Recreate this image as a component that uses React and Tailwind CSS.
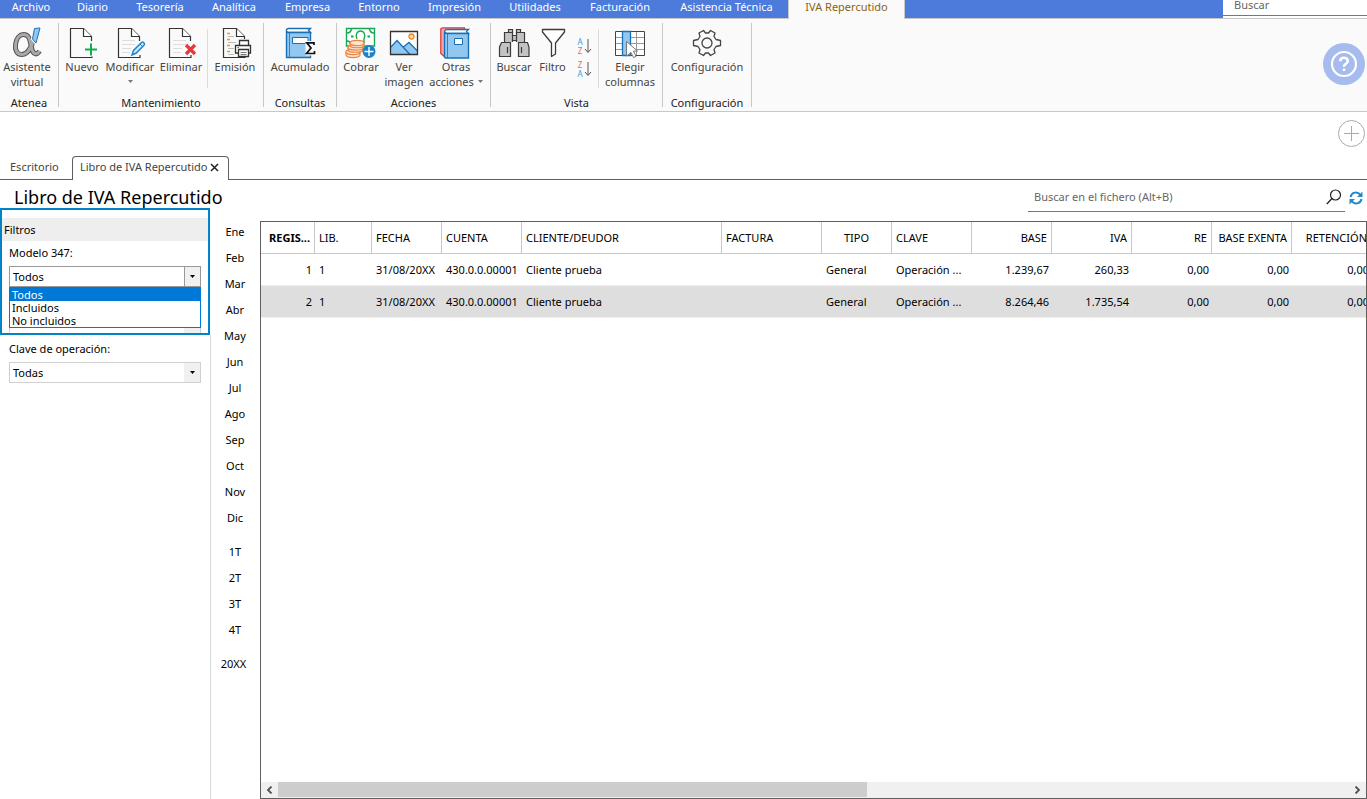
import React from "react";

const MENU = [
  ["Archivo", "w-[62px]"],
  ["Diario", "w-[61px]"],
  ["Tesorería", "w-[74px]"],
  ["Analítica", "w-[74px]"],
  ["Empresa", "w-[73px]"],
  ["Entorno", "w-[70px]"],
  ["Impresión", "w-[81px]"],
  ["Utilidades", "w-[80px]"],
  ["Facturación", "w-[90px]"],
  ["Asistencia Técnica", "w-[123px]"],
];

const MONTHS = ["Ene", "Feb", "Mar", "Abr", "May", "Jun", "Jul", "Ago", "Sep", "Oct", "Nov", "Dic"];
const QUARTERS = ["1T", "2T", "3T", "4T"];

const COLUMNS = [
  { name: "REGIS...", width: "w-[54px]", right: true, bold: true },
  { name: "LIB.", width: "w-[57px]" },
  { name: "FECHA", width: "w-[70px]" },
  { name: "CUENTA", width: "w-[80px]" },
  { name: "CLIENTE/DEUDOR", width: "w-[200px]" },
  { name: "FACTURA", width: "w-[100px]" },
  { name: "TIPO", width: "w-[70px]", centerHead: true },
  { name: "CLAVE", width: "w-[80px]" },
  { name: "BASE", width: "w-[80px]", right: true },
  { name: "IVA", width: "w-[80px]", right: true },
  { name: "RE", width: "w-[80px]", right: true },
  { name: "BASE EXENTA", width: "w-[80px]", right: true },
  { name: "RETENCIÓN", width: "w-[80px]", right: true },
];

const ROWS = [
  ["1", "1", "31/08/20XX", "430.0.0.00001", "Cliente prueba", "", "General", "Operación ...", "1.239,67", "260,33", "0,00", "0,00", "0,00"],
  ["2", "1", "31/08/20XX", "430.0.0.00001", "Cliente prueba", "", "General", "Operación ...", "8.264,46", "1.735,54", "0,00", "0,00", "0,00"],
];

function Icon({ children }) {
  return (
    <svg width="32" height="32" viewBox="0 0 32 32" fill="none" className="block overflow-visible" aria-hidden="true">
      {children}
    </svg>
  );
}

function Sheet({ edge = 14, base = 26 }) {
  return (
    <g stroke="#333" strokeWidth="1.2">
      <path d={`M25.5 ${edge}V9.5L17.5 1.5H4.5V30.5H${base}V28`} fill="none" />
      <path d="M17.5 1.5V9.5H25.5" fill="#fff" />
    </g>
  );
}

const SheetLines = () => <path d="M8 13.5H21M8 17.5H21M8 21.5H17M8 25.5H16" stroke="#ddd" />;

const ALPHA = "M23 11C21 18 18 27.500 11 27.500C5.500 27.500 3.800 22.500 4.600 17C5.500 10.500 9 7.500 12.500 7.500C18.500 7.500 19 13.500 20.500 20.500C21.700 27 25.500 29 28.500 24";

const AlphaIcon = () => (
  <Icon>
    <path d={ALPHA} stroke="#555" strokeWidth="5" />
    <path d={ALPHA} stroke="#a9a9a9" strokeWidth="3" />
    <path d="M23.500 1.500L29 1L25 16L21.500 12Z" fill="#92c8f0" stroke="#fafafa" strokeWidth="3" />
    <path d="M23.500 1.500L29 1L25 16L21.500 12Z" fill="#92c8f0" stroke="#1b73b8" />
  </Icon>
);

const NewIcon = () => (
  <Icon>
    <Sheet />
    <path d="M25 15.500V29.500M18 22.500H32" stroke="#fafafa" strokeWidth="4" />
    <path d="M25 16.500V28.500M19 22.500H31" stroke="#11ad4f" strokeWidth="2" />
  </Icon>
);

const EditIcon = () => (
  <Icon>
    <Sheet edge={14} />
    <SheetLines />
    <path d="M18 28L19.500 23.500L27.500 15.500C29 14.200 31.500 16.500 30 18.200L22 26.300Z" fill="#cfe6f8" stroke="#1f86cd" strokeWidth="1.500" />
    <path d="M26 17L29 20" stroke="#1f86cd" />
  </Icon>
);

const DeleteIcon = () => (
  <Icon>
    <Sheet />
    <SheetLines />
    <path d="M21 18L30 27M30 18L21 27" stroke="#ee3537" strokeWidth="3.200" />
  </Icon>
);

const PrintIcon = () => (
  <Icon>
    <Sheet edge={12} />
    <path d="M8 6.500H11M8 12.500H11M8 18.500H11M8 24.500H11" stroke="#f7941d" strokeWidth="1.300" />
    <path d="M9 9.500H15M9 15.500H17M9 21.500H15M9 27.500H15" stroke="#bbb" />
    <path d="M20.500 19V13.500H29.500V19M19.500 26H16.500V18.500H31.500V26H29" fill="#fff" stroke="#333" strokeWidth="1.300" />
    <path d="M19.500 22.500H29.500V29.500H19.500Z" fill="#fff" stroke="#333" strokeWidth="1.300" />
    <path d="M21.500 25.500H27.500M21.500 27.500H27.500" stroke="#777" />
    <path d="M18.500 20.500H20" stroke="#1f86cd" />
  </Icon>
);

const SumBookIcon = () => (
  <Icon>
    <path d="M4 1.500H26.500L24.500 3.500L26.500 5.500H4C1.800 5 1.800 2 4 1.500" fill="#fff" stroke="#1a70b5" strokeWidth="1.400" />
    <path d="M2.500 4.500C3 5.500 3.500 5.500 4 5.500H26.500V30.500H2.500Z" fill="#92c8f0" stroke="#1a70b5" strokeWidth="1.400" />
    <path d="M5.500 6V30" stroke="#1a70b5" strokeWidth=".8" />
    <path d="M8.500 10.500H24V16.500H8.500Z" fill="#fff" stroke="#1a70b5" />
    <path d="M21.500 14H32V28.500H21.500Z" fill="#fafafa" />
    <path d="M30 18V15.800H22.800L27 21L22.500 26.500H30.500V24" stroke="#111" strokeWidth="1.700" />
  </Icon>
);

const CashIcon = () => (
  <Icon>
    <path d="M1.500 1.500H29.500V19H1.500Z" fill="#fff" stroke="#16a656" strokeWidth="1.400" />
    <path d="M2 6C5 6 6 4.500 6.500 2M29 6C26 6 25 4.500 24.500 2M2 14C5 14 6 16 6.500 18.500M12 12C10 8 12 4 15.500 4S21 8 19 12V17" stroke="#16a656" strokeWidth="1.400" />
    <path d="M6 9.500H8.500M22.500 9.500H25" stroke="#16a656" strokeWidth="2" />
    <g fill="#fde5d0" stroke="#ee8441" strokeWidth="1.200">
      <path d="M1 25V28C2 31.500 14 31.500 15 28V25" />
      <ellipse cx="8" cy="25" rx="7" ry="2.600" />
      <path d="M3 20V23C4 26 17 26 18 23V20" />
      <ellipse cx="10.500" cy="20.500" rx="7.500" ry="2.600" />
      <path d="M5 16V18.500C6 21.500 18 21.500 19 18.500V16" />
      <ellipse cx="12" cy="16" rx="7" ry="2.600" />
    </g>
    <circle cx="24" cy="24.500" r="6.500" fill="#1c83cb" />
    <path d="M24 20V29M19.500 24.500H28.500" stroke="#fff" strokeWidth="1.400" />
  </Icon>
);

const PictureIcon = () => (
  <Icon>
    <path d="M2.500 4.500H29.500V27.500H2.500Z" fill="#fff" />
    <path d="M3 20L9 13.500L22 27.500H3Z" fill="#92c8f0" />
    <path d="M13 22L21 16L29.500 24V27.500H15Z" fill="#92c8f0" />
    <path d="M3 20L9 13.500L22 27.500M15.500 20L21 15.500L29.500 24" stroke="#1a70b5" strokeWidth="1.300" />
    <path d="M2.500 4.500H29.500V27.500H2.500Z" stroke="#333" strokeWidth="1.300" />
    <circle cx="23.500" cy="9.500" r="2.500" fill="#fcd9a6" stroke="#f08a24" strokeWidth="1.300" />
  </Icon>
);

const BooksIcon = () => (
  <Icon>
    <path d="M.8 2.500V26.500L5 30V5H24.500V.8H3C1 .8 .8 1.800 .8 2.500" fill="#f4a9a8" stroke="#e03a3a" strokeWidth="1.300" />
    <path d="M6.500 2.500H28.500L26.500 4.500L28.500 6.500H6.500C4 6 4 3 6.500 2.500" fill="#fff" stroke="#1a70b5" strokeWidth="1.300" />
    <path d="M4.500 5C5 6 6 6.500 7 6.500H28.500V31H5.500L4.500 30Z" fill="#92c8f0" stroke="#1a70b5" strokeWidth="1.400" />
    <path d="M7.500 7V31" stroke="#1a70b5" strokeWidth=".8" />
    <path d="M14.500 11.500H22.500V17.500H14.500Z" fill="#fff" stroke="#1a70b5" />
  </Icon>
);

const BinocularsIcon = () => (
  <Icon>
    <g fill="#c4c3c3" stroke="#3b3b3b" strokeWidth="1.200">
      <path d="M10.500 6V2.500H14.500V6M18.500 6V2.500H22.500V6" />
      <path d="M6.500 15V5.500H14.500V15M18.500 15V5.500H26.500V15M14.500 8.500H18.500V13.500H14.500Z" />
      <path d="M3.500 15.500H12.500V29.500H1.500V20ZM20.500 15.500H29.500L31 20V29.500H20.500Z" />
    </g>
    <path d="M9.500 20V26M23.500 20V26" stroke="#3b3b3b" strokeWidth="1.200" />
  </Icon>
);

const FunnelIcon = () => (
  <Icon>
    <path d="M5.500 2.500H27.500V5L18.500 16V27L14.500 29.500V16L5.500 5Z" fill="#fff" stroke="#3b3b3b" strokeWidth="1.300" strokeLinejoin="round" />
  </Icon>
);

const ColumnsIcon = () => (
  <Icon>
    <path d="M1.500 4.500H30.500V28.500H1.500Z" fill="#fff" />
    <path d="M2 10.500H30M2 16.500H30M2 22.500H30M22.500 5V28" stroke="#999" />
    <path d="M1.500 4.500H30.500V28.500H1.500Z" stroke="#444" />
    <path d="M8.500 4.500H16.500V28.500H8.500Z" fill="#92c8f0" stroke="#1a70b5" strokeWidth="1.300" />
    <path d="M12.500 14.500L23.500 24H19.500L22 29.500L19.500 30.500L17 25.500L12.500 29Z" fill="#fff" stroke="#777" />
  </Icon>
);

const GearIcon = () => (
  <Icon>
    <path
      d="M12.500 3.500L14.500 6H17.500L19.500 3.500L24 6L23 9.500L25 12.500L29.500 13.500V18.500L25 19.500L23 22.500L24 26L19.500 28.500L17.500 26H14.500L12.500 28.500L8 26L9 22.500L7 19.500L2.500 18.500V13.500L7 12.500L9 9.500L8 6Z"
      stroke="#444" strokeWidth="1.300" strokeLinejoin="round"
    />
    <circle cx="16" cy="16" r="5" stroke="#444" strokeWidth="1.300" />
  </Icon>
);

function Caret() {
  return (
    <svg width="5" height="3" viewBox="0 0 5 3" className="inline-block" aria-hidden="true">
      <path d="M0 0H5L2.500 3Z" fill="currentColor" />
    </svg>
  );
}

function Tool({ icon, label, second, caret, width }) {
  return (
    <button type="button" className={`flex flex-col items-center ${width}`}>
      {icon}
      <span className="leading-[15px]">{label}</span>
      {(second || caret) && (
        <span className="flex h-[15px] items-center gap-1 leading-[15px]">
          {second}
          {caret && <span className="flex text-[#777]"><Caret /></span>}
        </span>
      )}
    </button>
  );
}

function Group({ title, width, children }) {
  return (
    <section aria-label={title} className={`flex shrink-0 flex-col justify-between border-r border-[#c8c8c8] ${width}`}>
      <div className="flex pt-1">{children}</div>
      <h2 className="text-center leading-[8px] text-[#222]">{title}</h2>
    </section>
  );
}

const Divider = () => <div className="mt-[2px] h-[59px] w-px shrink-0 bg-[#dcdcdc]" />;

function SortButton({ top, bottom, label }) {
  const tone = (c) => (c === "A" ? "text-[#3f9bd8]" : "text-[#e8686a]");
  return (
    <button type="button" aria-label={label} className="flex items-center gap-px">
      <span className="flex flex-col text-[8px] leading-[9px]">
        <span className={tone(top)}>{top}</span>
        <span className={tone(bottom)}>{bottom}</span>
      </span>
      <svg width="8" height="16" viewBox="0 0 8 16" fill="none" aria-hidden="true">
        <path d="M4 1V14M1 11L4 14.500L7 11" stroke="#555" />
      </svg>
    </button>
  );
}

function Ribbon() {
  return (
    <div className="flex h-[93px] border-b border-[#c8c8c8] bg-[#fafafa] py-1 text-[11px] text-[#444]">
      <Group title="Atenea" width="w-[59px]">
        <Tool icon={<AlphaIcon />} label="Asistente" second="virtual" width="w-[54px]" />
      </Group>
      <Group title="Mantenimiento" width="w-[205px]">
        <Tool icon={<NewIcon />} label="Nuevo" width="w-[46px]" />
        <Tool icon={<EditIcon />} label="Modificar" caret width="w-[50px]" />
        <Tool icon={<DeleteIcon />} label="Eliminar" width="w-[52px]" />
        <Divider />
        <Tool icon={<PrintIcon />} label="Emisión" width="w-[54px]" />
      </Group>
      <Group title="Consultas" width="w-[73px]">
        <Tool icon={<SumBookIcon />} label="Acumulado" width="w-[72px]" />
      </Group>
      <Group title="Acciones" width="w-[154px]">
        <div className="flex pl-[3px]">
          <Tool icon={<CashIcon />} label="Cobrar" width="w-[42px]" />
          <Tool icon={<PictureIcon />} label="Ver" second="imagen" width="w-[44px]" />
          <Tool icon={<BooksIcon />} label="Otras" second="acciones" caret width="w-[60px]" />
        </div>
      </Group>
      <Group title="Vista" width="w-[172px]">
        <div className="flex pl-[3px]">
          <Tool icon={<BinocularsIcon />} label="Buscar" width="w-[40px]" />
          <Tool icon={<FunnelIcon />} label="Filtro" width="w-[37px]" />
          <div className="flex w-[27px] flex-col items-center gap-[5px] pt-[10px]">
            <SortButton top="A" bottom="Z" label="Orden ascendente" />
            <SortButton top="Z" bottom="A" label="Orden descendente" />
          </div>
          <Divider />
          <Tool icon={<ColumnsIcon />} label="Elegir" second="columnas" width="w-[62px]" />
        </div>
      </Group>
      <Group title="Configuración" width="w-[89px]">
        <Tool icon={<GearIcon />} label="Configuración" width="w-[88px]" />
      </Group>
      <button type="button" aria-label="Ayuda" className="mt-5 mr-[2px] ml-auto flex size-[42px] items-center justify-center rounded-full bg-[#a6bbee]">
        <svg width="28" height="28" viewBox="0 0 28 28" fill="none" stroke="#fff" aria-hidden="true">
          <circle cx="14" cy="14" r="12" strokeWidth="2.200" />
          <path d="M10.200 11.200C10.200 6.500 17.800 6.500 17.800 11.200C17.800 13.500 14 13.800 14 16.800" strokeWidth="2.500" />
          <path d="M14 18.500V21" strokeWidth="2.500" />
        </svg>
      </button>
    </div>
  );
}

function FilterSelect({ id, value, options, open }) {
  return (
    <div className="relative mx-[9px]">
      <select
        id={id}
        aria-label={id === "tipo" ? "Tipo" : undefined}
        defaultValue={value}
        className={`block h-[21px] w-full appearance-none rounded-none border bg-white pt-px pl-[3px] text-[11px] text-black ${open ? "border-[#999]" : "border-[#d0d0d0]"}`}
      >
        {options.map((o) => <option key={o}>{o}</option>)}
      </select>
      <span className={`pointer-events-none absolute inset-y-px right-px flex w-4 items-center justify-center bg-[#f0f0f0] text-black ${open ? "border-l border-[#999]" : ""}`}>
        <Caret />
      </span>
      {open && (
        <ul role="listbox" aria-label="Modelo 347" className="absolute inset-x-0 top-full z-10 border border-[#0078d7] bg-white text-[11px] leading-[13px]">
          {options.map((o) => (
            <li key={o} role="option" aria-selected={o === value} className={`pl-[2px] ${o === value ? "bg-[#0078d7] text-white" : ""}`}>{o}</li>
          ))}
        </ul>
      )}
    </div>
  );
}

function PeriodList({ items }) {
  return (
    <ul>
      {items.map((p) => (
        <li key={p}><button type="button" className="block h-[26px] w-full pr-px text-center">{p}</button></li>
      ))}
    </ul>
  );
}

const headAlign = (c) => (c.right ? "text-right" : c.centerHead ? "text-center" : "text-left");

function Ledger() {
  return (
    <div className="mt-[9px] flex min-h-0 flex-1 flex-col border border-[#5f5f5f]">
      <div className="flex-1 overflow-hidden">
        <table className="w-[1111px] table-fixed border-separate border-spacing-0 text-[11px]">
          <thead>
            <tr className="h-8">
              {COLUMNS.map((c) => (
                <th key={c.name} scope="col" className={`overflow-hidden border-r border-b border-[#c8c8c8] px-1 pt-[2px] whitespace-nowrap ${c.width} ${headAlign(c)} ${c.bold ? "font-bold" : "font-normal"}`}>
                  {c.name}
                </th>
              ))}
            </tr>
          </thead>
          <tbody>
            {ROWS.map((r, i) => (
              <tr key={r[0]} className={`h-8 ${i === 1 ? "bg-[#dedede]" : ""}`}>
                {r.map((v, j) => (
                  <td key={j} className={`border-b border-[#efefef] pt-[2px] pl-1 whitespace-nowrap ${COLUMNS[j].right ? "pr-[3px] text-right" : "text-left"}`}>{v}</td>
                ))}
              </tr>
            ))}
          </tbody>
        </table>
      </div>
      <div className="flex h-4 items-stretch bg-[#f0f0f0]">
        <button type="button" aria-label="Desplazar a la izquierda" className="flex w-[17px] items-center justify-center">
          <svg width="7" height="8" viewBox="0 0 7 8" fill="none" aria-hidden="true"><path d="M5.500 .5L2 4L5.500 7.500" stroke="#505050" strokeWidth="1.800" /></svg>
        </button>
        <div className="flex-1"><div className="h-[15px] w-[55%] bg-[#cdcdcd]" /></div>
        <button type="button" aria-label="Desplazar a la derecha" className="flex w-[17px] items-center justify-center">
          <svg width="7" height="8" viewBox="0 0 7 8" fill="none" aria-hidden="true"><path d="M1.500 .5L5 4L1.500 7.500" stroke="#505050" strokeWidth="1.800" /></svg>
        </button>
      </div>
    </div>
  );
}

export default function App() {
  return (
    <div className="flex min-h-screen flex-col overflow-hidden bg-white font-['Noto_Sans','Open_Sans',sans-serif] text-[11px] text-black">
      <header className="flex h-[19px] border-b border-[#c8c8c8] bg-[#4c7bdc] text-[11px] text-white">
        <nav className="flex">
          {MENU.map(([name, width]) => (
            <a key={name} href="#" className={`shrink-0 text-center leading-[14px] whitespace-nowrap ${width}`}>{name}</a>
          ))}
          <a href="#" aria-current="page" className="h-[19px] w-[117px] shrink-0 border-x border-[#c8c8c8] bg-[#fafafa] text-center leading-[14px] text-[#8a6414]">IVA Repercutido</a>
        </nav>
        <div className="ml-auto w-[144px] bg-white">
          <input type="text" aria-label="Buscar" placeholder="Buscar" className="block h-4 w-full border-b border-[#777] pb-[7px] pl-[11px] text-[11px] leading-[8px] outline-none placeholder:text-[#666]" />
        </div>
      </header>

      <Ribbon />

      <div className="flex h-11 justify-end pt-2 pr-[2px]">
        <button type="button" aria-label="Añadir" className="h-[27px]">
          <svg width="27" height="27" viewBox="0 0 27 27" fill="none" stroke="#aaa" aria-hidden="true">
            <circle cx="13.500" cy="13.500" r="13" />
            <path d="M13.500 6V21M6 13.500H21" />
          </svg>
        </button>
      </div>

      <div className="flex h-6 shrink-0 text-[#444]">
        <a href="#" className="w-[72px] border-b border-[#5f5f5f] pl-[10px] leading-[22px]">Escritorio</a>
        <div className="flex w-[157px] items-center justify-between rounded-t border-x border-t border-[#5f5f5f] pr-[9px] pb-[2px] pl-[7px]">
          <a href="#" className="whitespace-nowrap">Libro de IVA Repercutido</a>
          <button type="button" aria-label="Cerrar">
            <svg width="9" height="9" viewBox="0 0 9 9" aria-hidden="true"><path d="M1 1L8 8M8 1L1 8" stroke="#222" strokeWidth="1.500" /></svg>
          </button>
        </div>
        <div className="flex-1 border-b border-[#5f5f5f]" />
      </div>

      <main className="flex flex-1">
        <div className="flex w-[260px] shrink-0 flex-col">
          <h1 className="h-7 pt-1 pl-[14px] text-[18px] leading-[26px] whitespace-nowrap">Libro de IVA Repercutido</h1>
          <div className="flex flex-1">
            <aside className="flex w-[211px] flex-col">
              <section aria-label="Filtros" className="relative z-10 mr-px h-[127px] overflow-hidden border-2 border-[#0083c7]">
                <h2 className="mt-2 h-[23px] bg-[#eee] pl-[2px] leading-[23px]">Filtros</h2>
                <div className="-mx-[2px]">
                  <label htmlFor="modelo" className="block h-[25px] pl-[9px] leading-[24px]">Modelo 347:</label>
                  <FilterSelect id="modelo" value="Todos" options={["Todos", "Incluidos", "No incluidos"]} open />
                  <div className="pt-[26px]">
                    <FilterSelect id="tipo" value="" options={[""]} />
                  </div>
                </div>
              </section>
              <div className="flex-1 border-r border-[#d9d9d9]">
                <label htmlFor="clave" className="block h-[27px] pt-[6px] pl-[9px] leading-[16px]">Clave de operación:</label>
                <FilterSelect id="clave" value="Todas" options={["Todas"]} />
              </div>
            </aside>
            <nav aria-label="Periodo" className="flex w-[49px] flex-col gap-2 pt-[11px]">
              <PeriodList items={MONTHS} />
              <PeriodList items={QUARTERS} />
              <button type="button" className="h-[26px] pr-1 text-center">20XX</button>
            </nav>
          </div>
        </div>

        <div className="flex min-w-0 flex-1 flex-col">
          <div className="flex h-8 justify-end">
            <div className="flex w-[317px] items-center border-b border-[#777] pt-[3px] pr-[3px]">
              <input type="text" aria-label="Buscar en el fichero" placeholder="Buscar en el fichero (Alt+B)" className="min-w-0 flex-1 pl-[6px] text-[11px] outline-none placeholder:text-[#666]" />
              <svg width="16" height="16" viewBox="0 0 16 16" fill="none" stroke="#222" aria-hidden="true">
                <circle cx="9.500" cy="6" r="5" strokeWidth="1.200" />
                <path d="M6 9.500L.8 15" strokeWidth="1.300" />
              </svg>
            </div>
            <button type="button" aria-label="Actualizar" className="flex w-[22px] items-center justify-center pt-1">
              <svg width="14" height="14" viewBox="0 0 14 14" fill="none" aria-hidden="true">
                <path d="M1.500 6C2.500 1 8.500 0 11.500 4M12.500 8C11.500 13 5.500 14 2.500 10" stroke="#2389ce" strokeWidth="2" />
                <path d="M13.500 .5V6H8ZM.5 13.500V8H6Z" fill="#2389ce" />
              </svg>
            </button>
          </div>
          <Ledger />
        </div>
      </main>
    </div>
  );
}
